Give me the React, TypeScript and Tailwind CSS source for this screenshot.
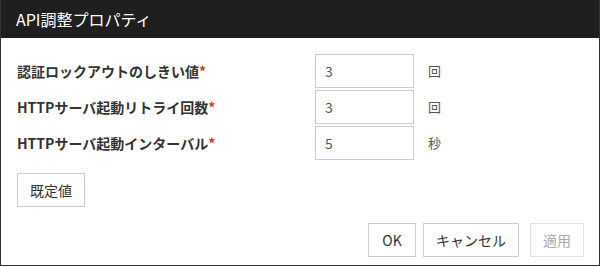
import React from "react";

const font = { fontFamily: '"Noto Sans CJK JP", "Noto Sans", sans-serif' };

function Row({ label, value, unit }: { label: string; value: string; unit: string }) {
  return (
    <div className="flex items-center h-[34px]">
      <div className="w-[298px] text-[14px] font-bold text-[#333]">
        {label}
        <span className="text-[#d0392b]">*</span>
      </div>
      <div className="w-[99px] h-[34px] border border-[#cccccc] flex items-center pl-[9px] text-[14px] text-[#555]">
        {value}
      </div>
      <div className="ml-[14px] text-[13px] text-[#555]">{unit}</div>
    </div>
  );
}

export default function App() {
  return (
    <div
      style={font}
      className="w-[600px] h-[266px] bg-white border-x border-b border-[#333] flex flex-col"
    >
      <div className="h-[38px] bg-[#1f1f1f] flex items-center pl-[15px] text-white text-[16px]">
        API調整プロパティ
      </div>
      <div className="pt-4 pl-4 flex flex-col">
        <div className="flex flex-col gap-[2px]">
          <Row label="認証ロックアウトのしきい値" value="3" unit="回" />
          <Row label="HTTPサーバ起動リトライ回数" value="3" unit="回" />
          <Row label="HTTPサーバ起動インターバル" value="5" unit="秒" />
        </div>
        <div className="mt-[13px]">
          <button className="w-[68px] h-[34px] border border-[#cccccc] text-[14px] text-[#333] flex items-center justify-center">
            既定値
          </button>
        </div>
      </div>
      <div className="mt-4 flex justify-end pr-[15px]">
        <button className="w-[48px] h-[34px] border border-[#cccccc] text-[14px] text-[#333] flex items-center justify-center">
          OK
        </button>
        <button className="ml-[7px] w-[96px] h-[34px] border border-[#cccccc] text-[14px] text-[#333] flex items-center justify-center">
          キャンセル
        </button>
        <button className="ml-[11px] w-[54px] h-[34px] border border-[#e3e3e3] text-[14px] text-[#aaa] flex items-center justify-center">
          適用
        </button>
      </div>
    </div>
  );
}
